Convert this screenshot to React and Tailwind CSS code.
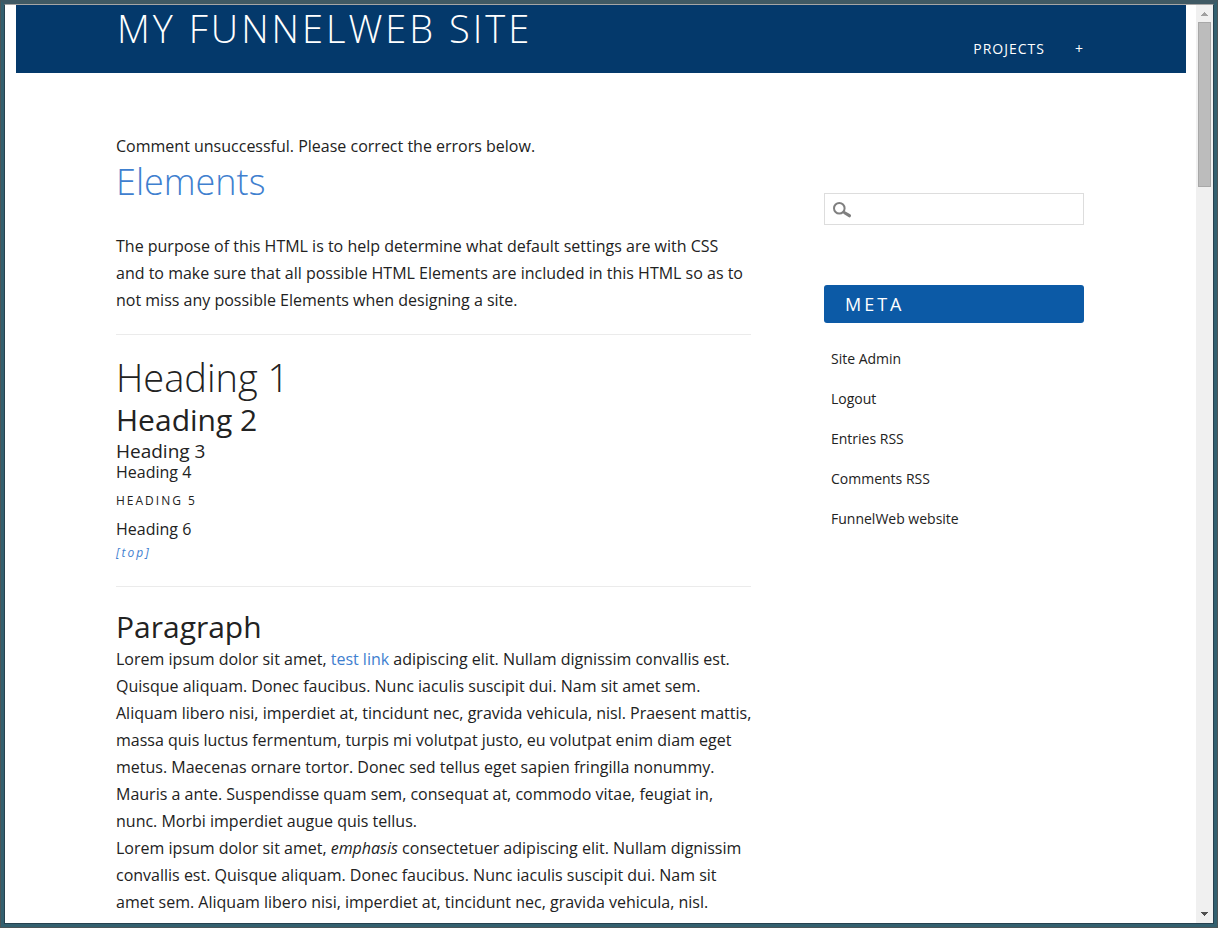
const metaLinks = ['Site Admin', 'Logout', 'Entries RSS', 'Comments RSS', 'FunnelWeb website'];

function Header() {
  return (
    <header className="mr-[10px] ml-[11px] flex h-[68px] shrink-0 justify-between bg-[#04396b] pr-[102px] pl-[101px] text-white">
      <a href="#home" className="text-[38px] leading-[46px] font-light tracking-[3px] whitespace-nowrap uppercase">
        My FunnelWeb Site
      </a>
      <nav className="flex gap-[30px] pt-[30px] text-sm leading-7 font-medium tracking-[1px]">
        <a href="#projects" className="uppercase">Projects</a>
        <a href="#more">+</a>
      </nav>
    </header>
  );
}

function Sidebar() {
  return (
    <aside className="w-[260px] shrink-0 pt-[60px]">
      <label className="flex h-8 items-center border border-[#dddddd] pl-2">
        <svg viewBox="0 -2 18 18" className="size-[18px] shrink-0" fill="none" stroke="#7f7f7f">
          <circle cx="6.3" cy="6.3" r="5.3" strokeWidth="2" />
          <path d="M10 9.6 L11.7 11" strokeWidth="2" />
          <path d="M12 11 L16.4 13.7" strokeWidth="3.2" strokeLinecap="round" />
        </svg>
        <input type="search" aria-label="Search" className="h-full w-full min-w-0 bg-transparent px-2 text-sm outline-none" />
      </label>
      <h2 className="mt-[60px] rounded-[3px] bg-[#0c5aa6] px-[21px] text-lg leading-[38px] font-medium tracking-[3px] text-white uppercase">
        Meta
      </h2>
      <ul className="mt-4 px-[7px] text-sm leading-10">
        {metaLinks.map((link) => (
          <li key={link}>
            <a href="#meta">{link}</a>
          </li>
        ))}
      </ul>
    </aside>
  );
}

function Divider() {
  return <hr className="my-5 border-[#ebebeb]" />;
}

function Article() {
  return (
    <main className="min-w-0 flex-1">
      <p>Comment unsuccessful. Please correct the errors below.</p>
      <h1 className="mb-[30px] text-4xl leading-[43px] font-light text-[#3f80cf]">
        <a href="#elements">Elements</a>
      </h1>
      <p className="pr-1">
        The purpose of this HTML is to help determine what default settings are with CSS and to make sure that all
        possible HTML Elements are included in this HTML so as to not miss any possible Elements when designing a site.
      </p>
      <Divider />
      <h1 className="text-[38px] leading-[44px] font-light">Heading 1</h1>
      <h2 className="text-3xl leading-[42px]">Heading 2</h2>
      <h3 className="text-[19px] leading-5">Heading 3</h3>
      <h4 className="leading-[22px]">Heading 4</h4>
      <h5 className="text-xs leading-9 tracking-[2px] uppercase">Heading 5</h5>
      <h6 className="leading-5">Heading 6</h6>
      <p className="text-xs leading-[27px] tracking-[2px] text-[#3f80cf] italic">
        <a href="#top">[top]</a>
      </p>
      <Divider />
      <h2 className="text-3xl leading-[39px]">Paragraph</h2>
      <div className="-mr-1">
        <p>
          Lorem ipsum dolor sit amet, <a href="#test" className="text-[#3f80cf]">test link</a> adipiscing elit. Nullam
          dignissim convallis est. Quisque aliquam. Donec faucibus. Nunc iaculis suscipit dui. Nam sit amet sem. Aliquam
          libero nisi, imperdiet at, tincidunt nec, gravida vehicula, nisl. Praesent mattis, massa quis luctus
          fermentum, turpis mi volutpat justo, eu volutpat enim diam eget metus. Maecenas ornare tortor. Donec sed
          tellus eget sapien fringilla nonummy. Mauris a ante. Suspendisse quam sem, consequat at, commodo vitae,
          feugiat in, nunc. Morbi imperdiet augue quis tellus.
        </p>
        <p>
          Lorem ipsum dolor sit amet, <em>emphasis</em> consectetuer adipiscing elit. Nullam dignissim convallis est.
          Quisque aliquam. Donec faucibus. Nunc iaculis suscipit dui. Nam sit amet sem. Aliquam libero nisi, imperdiet
          at, tincidunt nec, gravida vehicula, nisl. Praesent mattis, massa quis luctus fermentum, turpis mi volutpat
          justo, eu volutpat enim diam eget metus.
        </p>
      </div>
    </main>
  );
}

function Scrollbar() {
  return (
    <div aria-hidden="true" className="flex w-[17px] shrink-0 flex-col items-center bg-[#f0f0f0]">
      <svg viewBox="0 0 17 17" className="size-[17px]" fill="#a0a0a0" shapeRendering="crispEdges">
        <path d="M5 11 L8.5 7 L12 11 Z" />
      </svg>
      <div className="h-[165px] w-[13px] border border-[#a8a8a8] bg-[#bcbcbc]" />
      <svg viewBox="0 0 17 17" className="mt-auto size-[17px]" fill="#505050" shapeRendering="crispEdges">
        <path d="M5 6 L8.5 10 L12 6 Z" />
      </svg>
    </div>
  );
}

export default function App() {
  return (
    <div className="h-screen border border-t-[#3f5964] border-r-[#4b5558] border-b-[#4b5558] border-l-[#4b5558] font-['Open_Sans',sans-serif] text-base leading-[27px] text-[#222222]">
      <div className="h-full border-3 border-t-[#3f5964] border-r-[#33606f] border-b-[#33606f] border-l-[#33606f]">
        <div className="flex h-full border border-t-[#a5a5a5] border-r-[#26414f] border-b-[#26414f] border-l-[#26414f] bg-white">
          <div className="min-w-0 flex-1 overflow-hidden">
            <Header />
            <div className="flex gap-[73px] pt-[60px] pr-[112px] pl-[111px]">
              <Article />
              <Sidebar />
            </div>
          </div>
          <Scrollbar />
        </div>
      </div>
    </div>
  );
}
